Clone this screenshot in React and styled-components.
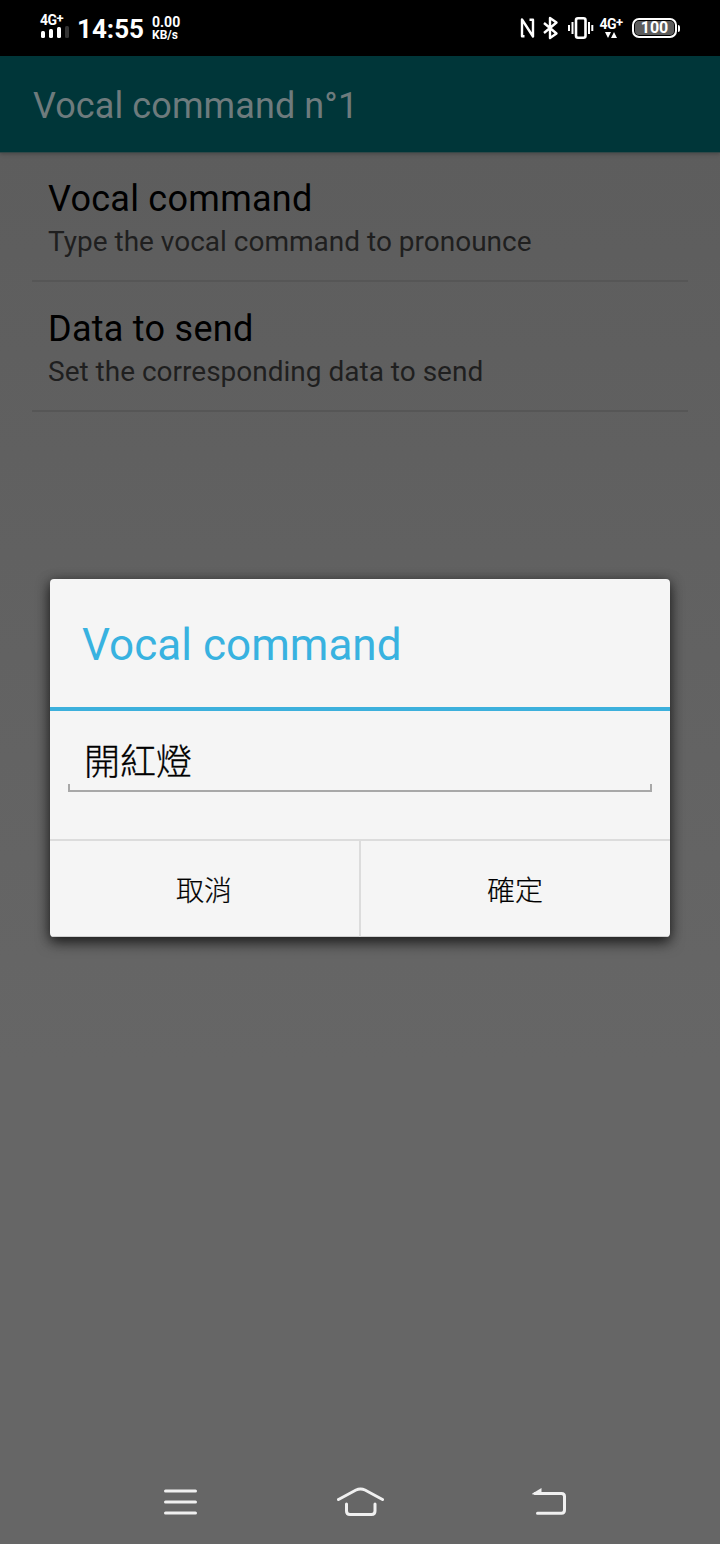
import React from "react";
import styled, { createGlobalStyle } from "styled-components";

const GlobalStyle = createGlobalStyle`
  *, *::before, *::after { box-sizing: border-box; }
  body { margin: 0; background: #666; }
`;

const Screen = styled.div`
  position: relative;
  width: 720px;
  height: 1544px;
  display: flex;
  flex-direction: column;
  overflow: hidden;
  background: linear-gradient(#5d5d5d 150px, #666 1060px);
  font-family: Roboto, "Noto Sans CJK TC", sans-serif;
`;

const StatusBar = styled.header`
  display: flex;
  justify-content: space-between;
  height: 56px;
  padding: 0 40px;
  background: #000;
  color: #fff;
  font-weight: 700;
`;

const StatusGroup = styled.div`
  display: flex;
  align-items: center;
`;

const Signal = styled.div`
  display: flex;
  flex-direction: column;
  width: 30px;
  gap: 0;
  padding-bottom: 4px;
`;

const NetworkLabel = styled.span`
  font-size: 14px;
  line-height: 12px;
  letter-spacing: -0.6px;
  white-space: nowrap;
  sup { font-size: 13px; line-height: 0; vertical-align: 2px; }
`;

const Clock = styled.time`
  width: 82px;
  padding: 1px 0 0 7px;
  font-size: 26px;
  line-height: 30px;
`;

const Speed = styled.div`
  display: flex;
  flex-direction: column;
  padding-top: 2px;
  font-size: 14px;
  line-height: 12.5px;
`;

const SpeedUnit = styled.span`
  font-size: 12px;
  line-height: 13px;
`;

const MobileData = styled.div`
  display: flex;
  flex-direction: column;
  align-items: center;
  gap: 2px;
  width: 24px;
  margin: 0 9px 0 5px;
`;

const Battery = styled.div`
  display: flex;
  align-items: center;
  gap: 1px;
`;

const BatteryBody = styled.div`
  width: 45px;
  height: 20px;
  border: 2px solid #fff;
  border-radius: 7px;
  background: #5c5c5c;
  box-shadow: inset 0 0 0 1px #000;
  font-size: 16px;
  line-height: 16px;
  text-align: center;
`;

const BatteryTip = styled.div`
  width: 2px;
  height: 7px;
  border-radius: 0 2px 2px 0;
  background: #fff;
`;

const AppBar = styled.div`
  display: flex;
  align-items: center;
  height: 97px;
  padding: 4px 33px 0;
  border-bottom: 1px solid #354848;
  background: #003639;
  box-shadow: 0 1px 4px rgba(0, 0, 0, 0.25);
`;

const AppTitle = styled.h1`
  margin: 0;
  color: #6e7b7d;
  font-size: 36px;
  font-weight: 400;
  line-height: 44px;
  letter-spacing: 0.1px;
`;

const Preferences = styled.main`
  flex: 1;
  padding: 0 32px;
`;

const Preference = styled.section`
  height: 130px;
  padding: 25px 16px 0;
  border-bottom: 2px solid #565656;
  &:first-child { height: 129px; padding-top: 24px; }
`;

const PreferenceTitle = styled.h2`
  margin: 0;
  color: #000;
  font-size: 36px;
  font-weight: 400;
  line-height: 44px;
  letter-spacing: 0.27px;
`;

const PreferenceSummary = styled.p`
  margin: 3px 0 0;
  color: #1f1f1f;
  font-size: 28px;
  line-height: 36px;
`;

const NavBar = styled.nav`
  display: flex;
  gap: 139px;
  align-items: center;
  height: 84px;
  padding: 1px 0 0 164px;
`;

const Dialog = styled.div`
  position: absolute;
  top: 579px;
  left: 50px;
  display: flex;
  flex-direction: column;
  width: 620px;
  height: 358px;
  border-radius: 4px;
  overflow: hidden;
  background: #f5f5f5;
  box-shadow: 0 6px 14px rgba(0, 0, 0, 0.6), 0 1px 12px rgba(0, 0, 0, 0.35);
`;

const DialogTitle = styled.h2`
  height: 132px;
  margin: 0;
  padding: 0 32px;
  border-bottom: 4px solid #3cb0dc;
  color: #38b2e0;
  font-size: 44px;
  font-weight: 400;
  line-height: 133px;
  letter-spacing: 0.04px;
`;

const DialogBody = styled.div`
  flex: 1;
  padding: 20px 18px 0;
`;

const Field = styled.div`
  height: 61px;
  padding: 2px 16px 0;
  background:
    linear-gradient(#a8a8a8, #a8a8a8) left bottom / 2px 8px no-repeat,
    linear-gradient(#a8a8a8, #a8a8a8) right bottom / 2px 8px no-repeat,
    linear-gradient(#a8a8a8, #a8a8a8) left bottom / 100% 2px no-repeat;
  color: #000;
  font-family: "Noto Sans CJK TC", sans-serif;
  font-size: 36px;
  font-weight: 300;
  line-height: 52px;
  -webkit-text-stroke: 0.3px #000;
`;

const Actions = styled.div`
  display: flex;
  height: 98px;
  border-top: 2px solid #dcdcdc;
`;

const ActionButton = styled.button`
  flex: 1;
  padding: 0 1px 0 0;
  border: 0;
  border-bottom: 1px solid #d0d0d0;
  background: transparent;
  color: #000;
  font-family: "Noto Sans CJK TC", sans-serif;
  font-size: 28px;
  font-weight: 300;
  line-height: 40px;
  -webkit-text-stroke: 0.2px #000;
  & + & { border-left: 2px solid #dcdcdc; }
`;

const SignalBars = () => (
  <svg width="29" height="12" viewBox="0 0 29 12">
    <rect x="1" y="5" width="4" height="7" rx="1.5" fill="#fff" />
    <rect x="9" y="3" width="4" height="9" rx="1.5" fill="#fff" />
    <rect x="17" y="1" width="4" height="11" rx="1.5" fill="#fff" />
    <rect x="25" y="0" width="4" height="12" rx="1.5" fill="#333" />
  </svg>
);

const StatusIcons = () => (
  <svg width="75" height="24" viewBox="0 0 75 24" fill="none" stroke="#fff">
    <path d="M5.5 20.3H3V3.5L14 20.5V3.7H10.5" strokeWidth="2.4" strokeLinejoin="round" />
    <path d="M25 7L37.5 17.5L31 22V2L37.5 6.5L25 17" strokeWidth="2.4" strokeLinejoin="round" />
    <rect x="57" y="2.2" width="9.5" height="19.6" rx="2" strokeWidth="2.6" />
    <path d="M53.5 6V18M50 9V15M70 6V18M73.3 9V15" strokeWidth="2" />
  </svg>
);

const DataArrows = () => (
  <svg width="12" height="6" viewBox="0 0 12 6" fill="#fff">
    <path d="M0 0H6L3 6ZM6 6L9 0L12 6Z" />
  </svg>
);

const NavIcon = styled.svg`
  flex: none;
  fill: none;
  stroke: #f0f0f0;
  stroke-width: 3;
  stroke-linecap: round;
`;

const preferences = [
  { title: "Vocal command", summary: "Type the vocal command to pronounce" },
  { title: "Data to send", summary: "Set the corresponding data to send" },
];

export default function App() {
  return (
    <>
      <GlobalStyle />
      <Screen>
        <StatusBar>
          <StatusGroup>
            <Signal>
              <NetworkLabel>4G<sup>+</sup></NetworkLabel>
              <SignalBars />
            </Signal>
            <Clock>14:55</Clock>
            <Speed>
              0.00
              <SpeedUnit>KB/s</SpeedUnit>
            </Speed>
          </StatusGroup>
          <StatusGroup>
            <StatusIcons />
            <MobileData>
              <NetworkLabel>4G<sup>+</sup></NetworkLabel>
              <DataArrows />
            </MobileData>
            <Battery>
              <BatteryBody>100</BatteryBody>
              <BatteryTip />
            </Battery>
          </StatusGroup>
        </StatusBar>
        <AppBar>
          <AppTitle>Vocal command n°1</AppTitle>
        </AppBar>
        <Preferences>
          {preferences.map((item) => (
            <Preference key={item.title}>
              <PreferenceTitle>{item.title}</PreferenceTitle>
              <PreferenceSummary>{item.summary}</PreferenceSummary>
            </Preference>
          ))}
        </Preferences>
        <NavBar>
          <NavIcon width="34" height="28" viewBox="0 0 34 28">
            <path d="M1.5 2H31.5M1.5 13H31.5M1.5 24H31.5" />
          </NavIcon>
          <NavIcon width="56" height="32" viewBox="0 0 56 32">
            <path d="M1.5 12.5L19 3Q23.5 0.9 28 3L45.5 12.5M9.5 17V24Q9.5 27.5 13 27.5H34.5Q38 27.5 38 24V17" />
          </NavIcon>
          <NavIcon width="36" height="30" viewBox="0 0 36 30">
            <path d="M3 5.5H29.5Q32.5 5.5 32.5 8.5V22Q32.5 25.3 29.5 25.3H5.5" />
            <path d="M-1 6.3L9.5 0V7Z" fill="#f0f0f0" stroke="none" />
          </NavIcon>
        </NavBar>
        <Dialog role="dialog">
          <DialogTitle>Vocal command</DialogTitle>
          <DialogBody>
            <Field>開紅燈</Field>
          </DialogBody>
          <Actions>
            <ActionButton>取消</ActionButton>
            <ActionButton>確定</ActionButton>
          </Actions>
        </Dialog>
      </Screen>
    </>
  );
}
